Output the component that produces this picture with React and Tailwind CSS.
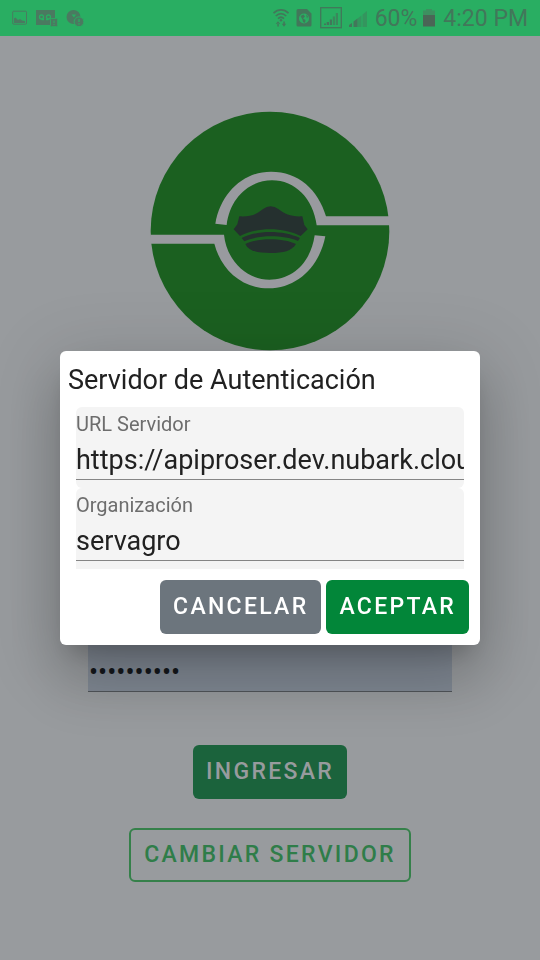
import { useState } from 'react';
import clsx from 'clsx';

const BUTTON = 'h-[54px] rounded-md px-[13px] text-[23px] font-medium tracking-widest uppercase';

function StatusBar() {
  return (
    <header className="flex h-9 items-center justify-between bg-[#29ae62] px-3 text-[23px] text-[#42775a]">
      <div className="flex items-center gap-2 text-[#4a7a60]">
        <svg className="h-4 w-4" viewBox="0 0 16 16" fill="none" stroke="currentColor">
          <rect x="0.7" y="1.2" width="13.8" height="13" rx="1" />
          <path d="M2 13V8.500l1.500-1L6 10l2-1 2 1.500 3 .5v2z" fill="currentColor" stroke="none" />
        </svg>
        <svg className="h-[18px] w-[22px]" viewBox="0 0 22 18">
          <path d="M0 1h19v8h-5v7H0z" fill="currentColor" />
          <g fill="none" stroke="#29ae62" strokeWidth="1.300">
            <circle cx="5.5" cy="8" r="2" />
            <circle cx="12.500" cy="8" r="2" />
            <path d="M5.500 10.500h2.500M10 10.500h2.500" />
          </g>
          <rect x="14.500" y="9.500" width="7" height="8" rx="1" fill="currentColor" stroke="#29ae62" strokeWidth="0.600" />
          <path d="M18 11.500v2.500M18 15v1" stroke="#29ae62" />
        </svg>
        <svg className="h-[18px] w-[18px]" viewBox="0 0 18 18">
          <circle cx="7.500" cy="8" r="7" fill="currentColor" />
          <path d="M5.500 5.500h4.500l-2 3z" fill="#29ae62" />
          <circle cx="13" cy="12.800" r="4.900" fill="currentColor" stroke="#29ae62" />
          <path d="M13 10v3M13 14.300v1.200" stroke="#29ae62" strokeWidth="1.300" />
        </svg>
      </div>

      <div className="flex items-center">
        <svg className="mr-[7px] h-5 w-4" viewBox="0 0 16 20" fill="none" stroke="currentColor">
          <path d="M0.500 5.200c4.500-4.400 10.500-4.400 15 0M2.800 8c3.200-3 7.200-3 10.400 0M5 10.600c2-1.800 4-1.800 6 0" strokeWidth="1.700" />
          <circle cx="8" cy="12.300" r="1.200" fill="currentColor" stroke="none" />
          <path d="M2.800 16h4.400L5 13.200zM4.300 15.500h1.500v3H4.300zM8.800 15.800h4.400L11 18.700zM10.300 13.500h1.500v3h-1.500z" fill="currentColor" stroke="none" />
        </svg>
        <svg className="mr-2 h-[18px] w-4" viewBox="0 0 16 18">
          <path d="M2 0h9l4.500 4.500V16a1.500 1.500 0 0 1-1.500 1.500H2A1.500 1.500 0 0 1 .5 16V1.500A1.500 1.500 0 0 1 2 0z" fill="currentColor" />
          <circle cx="8" cy="9.500" r="5" fill="#29ae62" />
          <path d="M4.500 7l3-1.500 1.500 2-2 2 2.500 1.500-.5 3-2-1-.5-2.500zM10 5.500l2 2-1 2z" fill="currentColor" />
        </svg>
        <svg className="mr-[7px] h-[22px] w-[22px]" viewBox="0 0 22 22">
          <rect x="0.700" y="0.700" width="20.600" height="20" fill="none" stroke="currentColor" strokeWidth="1.300" />
          <path d="M4 16.500h2V18H4zM6.700 15h2.300v3H6.700zM9.800 12.500H12V18H9.800z" fill="currentColor" />
          <path d="M12.800 9.500H15V18h-2.200zM15.800 6H18v12h-2.200z" fill="currentColor" opacity="0.7" />
        </svg>
        <svg className="mr-2 h-5 w-[18px]" viewBox="0 0 18 20" fill="currentColor">
          <path d="M0 17l3-2v4H0zM4.500 13.500l4-3V19h-4z" />
          <path d="M8.500 10.500l4-3V19h-4zM13.500 6.500L18 3v16h-4.500z" opacity="0.45" />
        </svg>
        <span className="pt-[2px]">60%</span>
        <svg className="mr-2 ml-[6px] h-[18px] w-3" viewBox="0 0 12 18">
          <path d="M3 0h6v1.500h3V6H0V1.500h3z" fill="#3d9060" />
          <path d="M0 6h12v11.500H0z" fill="#4a6656" />
        </svg>
        <span className="pt-[2px]">4:20 PM</span>
      </div>
    </header>
  );
}

function Logo() {
  return (
    <svg className="h-60 w-60" viewBox="31 32 718 720" role="img">
      <circle cx="390" cy="392" r="358" fill="#1b6020" />
      <g fill="#999a9f">
        <path d="M226 370C242 278 310 214 393 214C475 214 535 268 558 348H749V375H530C520 295 465 240 396 240C328 240 270 292 260 374Z" />
        <path d="M31 403H252C260 480 318 538 388 538C457 538 512 488 524 405L556 408C538 500 470 564 386 564C305 564 243 508 223 430H31Z" />
      </g>
      <g fill="#25302f">
        <path d="M298 348C330 350 350 342 368 327Q392 308 416 327C435 342 455 350 487 348L493 374L503 387L482 407C430 380 350 380 300 407L281 387L292 372Z" />
        <path d="M305 413C350 389 430 389 480 413L474 422C430 403 355 403 313 423Z" />
        <path d="M316 431C350 412 430 412 468 431C455 452 430 458 392 458C350 458 325 451 316 431Z" />
      </g>
    </svg>
  );
}

function Field({ id, label, value, onChange, className }) {
  return (
    <div className={clsx('bg-[#f4f4f4] pb-2', className)}>
      <label htmlFor={id} className="block h-[33px] text-[20px] leading-[35px] text-[#6d6d6d]">
        {label}
      </label>
      <input
        id={id}
        type="text"
        value={value}
        onChange={(e) => onChange(e.target.value)}
        className="block h-10 w-full border-b border-[#858585] bg-transparent pt-[2px] text-[27px] text-[#212121] outline-none"
      />
    </div>
  );
}

function ServerDialog() {
  const [url, setUrl] = useState('https://apiproser.dev.nubark.cloud');
  const [org, setOrg] = useState('servagro');

  return (
    <div className="fixed inset-x-0 top-9 bottom-0 flex items-center justify-center px-[60px]">
      <div
        role="dialog"
        aria-labelledby="dialog-title"
        className="w-full max-w-[560px] rounded-md bg-white shadow-[0_16px_22px_-10px_rgba(0,0,0,0.2),0_36px_57px_4px_rgba(0,0,0,0.14),0_14px_69px_12px_rgba(0,0,0,0.12)]"
      >
        <h2 id="dialog-title" className="h-14 px-2 text-[27px] leading-[58px] text-[#212121]">
          Servidor de Autenticación
        </h2>
        <div className="px-4">
          <Field id="url" label="URL Servidor" value={url} onChange={setUrl} className="rounded-md" />
          <Field id="org" label="Organización" value={org} onChange={setOrg} className="rounded-t-md" />
        </div>
        <div className="flex justify-end gap-[5px] p-[11px]">
          <button type="button" className={clsx(BUTTON, 'bg-[#6c757d] text-white')}>
            Cancelar
          </button>
          <button type="button" className={clsx(BUTTON, 'bg-[#028639] text-white')}>
            Aceptar
          </button>
        </div>
      </div>
    </div>
  );
}

export default function App() {
  const [password, setPassword] = useState('servagro01');

  return (
    <div className="flex min-h-screen flex-col bg-[#989b9e] font-[Roboto,sans-serif]">
      <StatusBar />
      <main className="flex flex-col items-center px-[88px] pt-[75px]">
        <Logo />
        <input
          type="password"
          aria-label="Contraseña"
          value={password}
          onChange={(e) => setPassword(e.target.value)}
          className="mt-72 h-[53px] w-full border-b border-[#51555a] bg-[#818994] pt-[14px] pl-px text-[27px] text-[#14171b] outline-none"
        />
        <button type="button" className={clsx(BUTTON, 'mt-[53px] bg-[#1b633c] text-[#989b9e]')}>
          Ingresar
        </button>
        <button
          type="button"
          className={clsx(BUTTON, 'mt-[29px] border-2 border-[#35804a] text-[#2f7d49]')}
        >
          Cambiar servidor
        </button>
      </main>
      <ServerDialog />
    </div>
  );
}
